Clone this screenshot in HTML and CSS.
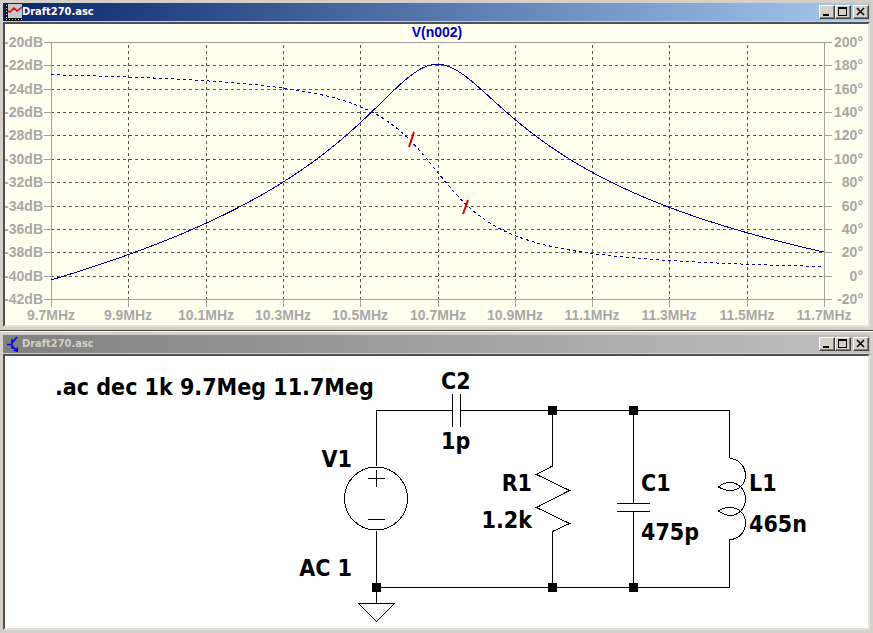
FILE: index.html
```html
<!DOCTYPE html>
<html lang="en">
<head>
    <meta charset="UTF-8">
    <meta name="viewport" content="width=device-width, initial-scale=1.0">
    <title>Draft270.asc</title>
    <link rel="stylesheet" href="styles.css">
</head>
<body>
    <section class="window">
        <header class="titlebar active">
            <svg class="icon" width="17" height="17" viewBox="0 0 17 17">
                <rect width="17" height="17" fill="#111"/>
                <rect x="3" y="0" width="14" height="14" fill="#c8c8c8"/>
                <path d="M1.5 1V16M1 15.5H17" stroke="#ddd" stroke-dasharray="1 2" shape-rendering="crispEdges"/>
                <path d="M3 7L5 8L9 4L12 7L17 3" fill="none" stroke="#e00000" stroke-width="1.5"/>
            </svg>
            <h1 class="caption">Draft270.asc</h1>
            <div class="controls">
                <button class="control" aria-label="Minimize"><svg width="12" height="10"><path d="M2 8H8" stroke="#000" stroke-width="2"/></svg></button>
                <button class="control" aria-label="Maximize"><svg width="12" height="10"><path d="M1.5 1V8.5H9.5V1" fill="none" stroke="#000"/><path d="M1 1H10" stroke="#000" stroke-width="2"/></svg></button>
                <button class="control close" aria-label="Close"><svg class="cross" width="12" height="10"><path d="M2 1L9 8M9 1L2 8" stroke="#000" stroke-width="1.5"/></svg></button>
            </div>
        </header>
        <div class="view plot-view">
            <svg class="plot" viewBox="5 24 863 301">
                <path class="grid" d="M51 65.5H824M51 89.5H824M51 112.5H824M51 135.5H824M51 159.5H824M51 182.5H824M51 206.5H824M51 229.5H824M51 252.5H824M51 276.5H824"/>
                <path class="grid" d="M128.5 45V299M206.5 45V299M283.5 45V299M360.5 45V299M438.5 45V299M515.5 45V299M592.5 45V299M669.5 45V299M747.5 45V299"/>
                <path class="axis" d="M44 42.5H832M44 299.5H832M51.5 42V307M824.5 42V307"/>
                <path class="axis" d="M44 65.5H51M44 89.5H51M44 112.5H51M44 135.5H51M44 159.5H51M44 182.5H51M44 206.5H51M44 229.5H51M44 252.5H51M44 276.5H51"/>
                <path class="axis" d="M824 65.5H832M824 89.5H832M824 112.5H832M824 135.5H832M824 159.5H832M824 182.5H832M824 206.5H832M824 229.5H832M824 252.5H832M824 276.5H832"/>
                <path class="axis" d="M128.5 299V307M206.5 299V307M283.5 299V307M360.5 299V307M438.5 299V307M515.5 299V307M592.5 299V307M669.5 299V307M747.5 299V307"/>
                <path class="trace" id="magnitude"/>
                <path class="trace phase" id="phase"/>
                <path class="mark" d="M414 132L409 147M468 200L463 214"/>
                <text class="trace-name" x="437" y="37">V(n002)</text>
                <g class="labels end">
                    <text x="43" y="47">-20dB</text>
                    <text x="43" y="70">-22dB</text>
                    <text x="43" y="94">-24dB</text>
                    <text x="43" y="117">-26dB</text>
                    <text x="43" y="140">-28dB</text>
                    <text x="43" y="164">-30dB</text>
                    <text x="43" y="187">-32dB</text>
                    <text x="43" y="211">-34dB</text>
                    <text x="43" y="234">-36dB</text>
                    <text x="43" y="257">-38dB</text>
                    <text x="43" y="281">-40dB</text>
                    <text x="43" y="304">-42dB</text>
                </g>
                <g class="labels end">
                    <text x="863" y="47">200°</text>
                    <text x="863" y="70">180°</text>
                    <text x="863" y="94">160°</text>
                    <text x="863" y="117">140°</text>
                    <text x="863" y="140">120°</text>
                    <text x="863" y="164">100°</text>
                    <text x="863" y="187">80°</text>
                    <text x="863" y="211">60°</text>
                    <text x="863" y="234">40°</text>
                    <text x="863" y="257">20°</text>
                    <text x="863" y="281">0°</text>
                    <text x="863" y="304">-20°</text>
                </g>
                <g class="labels middle">
                    <text x="51" y="320">9.7MHz</text>
                    <text x="128" y="320">9.9MHz</text>
                    <text x="206" y="320">10.1MHz</text>
                    <text x="283" y="320">10.3MHz</text>
                    <text x="360" y="320">10.5MHz</text>
                    <text x="438" y="320">10.7MHz</text>
                    <text x="515" y="320">10.9MHz</text>
                    <text x="592" y="320">11.1MHz</text>
                    <text x="669" y="320">11.3MHz</text>
                    <text x="747" y="320">11.5MHz</text>
                    <text x="824" y="320">11.7MHz</text>
                </g>
            </svg>
        </div>
    </section>

    <section class="window">
        <header class="titlebar">
            <svg class="icon" width="17" height="17" viewBox="0 0 17 17">
                <path d="M2 8.5H6M7 3V13M7 7L12 1M7 10L12 15" fill="none" stroke="#0000e0" stroke-width="1.5"/>
                <path d="M13 16V11L8 15Z" fill="#0000e0"/>
            </svg>
            <h1 class="caption">Draft270.asc</h1>
            <div class="controls">
                <button class="control" aria-label="Minimize"><svg width="12" height="10"><path d="M2 8H8" stroke="#000" stroke-width="2"/></svg></button>
                <button class="control" aria-label="Maximize"><svg width="12" height="10"><path d="M1.5 1V8.5H9.5V1" fill="none" stroke="#000"/><path d="M1 1H10" stroke="#000" stroke-width="2"/></svg></button>
                <button class="control close" aria-label="Close"><svg class="cross" width="12" height="10"><path d="M2 1L9 8M9 1L2 8" stroke="#000" stroke-width="1.5"/></svg></button>
            </div>
        </header>
        <div class="view">
            <svg class="schematic" viewBox="5 356 863 272">
                <!-- wires -->
                <path class="wire" d="M376.5 466V410.5H452M461 410.5H729.5V458M376.5 531V603M376 587.5H729.5V539M633.5 410V503M633.5 512V587"/>
                <!-- C2, C1 -->
                <path class="wire" d="M452.5 394V427M460.5 394V427M617 503.5H650M617 511.5H650"/>
                <!-- V1 -->
                <circle class="wire" cx="376" cy="498.5" r="31.5"/>
                <path class="wire" d="M368 478.5H385M376.5 470V487M368 519.5H385"/>
                <!-- R1 -->
                <path class="wire" d="M552.5 410V466L536.5 474.5L569.5 490.5L536.5 507.5L569.5 523.5L552.5 531.5V587"/>
                <!-- L1 -->
                <path class="wire" d="M729.5 458.5C739 458.5 745.5 467 745.5 475.5C745.5 484 739 490.5 730 490.5C725 490.5 722 489 718.5 487C722 484 725 482.5 730 482.5C739 482.5 745.5 490 745.5 499C745.5 508 739 515.5 730 515.5C725 515.5 722 513 718.5 511C722 508 725 507.5 730 507.5C739 507.5 745.5 514 745.5 523C745.5 532 739 539.5 729.5 539.5"/>
                <!-- ground -->
                <path class="wire" d="M358.5 603.5H394.5L376.5 621.5Z"/>
                <path d="M548 406h9v9h-9zM629 406h9v9h-9zM372 583h9v9h-9zM548 583h9v9h-9zM629 583h9v9h-9z"/>
                <g class="parts">
                    <text x="55" y="395">.ac dec 1k 9.7Meg 11.7Meg</text>
                    <text x="441" y="389">C2</text>
                    <text x="441" y="449">1p</text>
                    <text x="641" y="491">C1</text>
                    <text x="641" y="540">475p</text>
                    <text x="749" y="491">L1</text>
                    <text x="749" y="532">465n</text>
                </g>
                <g class="parts end">
                    <text x="352" y="467">V1</text>
                    <text x="352" y="576">AC 1</text>
                    <text x="532" y="491">R1</text>
                    <text x="532" y="528">1.2k</text>
                </g>
            </svg>
        </div>
    </section>

    <script>
        // V1 drives the R1 / C1 / L1 tank through C2
        const R = 1200, C1 = 475e-12, C2 = 1e-12, L = 465e-9;
        let magnitude = "";
        let phase = "";

        for (let x = 51; x <= 824; x++) {
            const f = 9.7e6 + (x - 51) / 773 * 2e6;
            const w = 2 * Math.PI * f;
            const g = 1 / R;
            const b = w * (C1 + C2) - 1 / (w * L);
            const dB = 20 * Math.log10(w * C2 / Math.hypot(g, b));
            const deg = 90 - Math.atan2(b, g) * 180 / Math.PI;
            const cmd = x === 51 ? "M" : "L";
            magnitude += cmd + x + " " + (42.5 + (-20 - dB) / 22 * 257).toFixed(2);
            phase += cmd + x + " " + (42.5 + (200 - deg) / 220 * 257).toFixed(2);
        }

        document.getElementById("magnitude").setAttribute("d", magnitude);
        document.getElementById("phase").setAttribute("d", phase);
    </script>
</body>
</html>
```
FILE: styles.css
```css
body {
    margin: 0;
    background-color: #d4d0c8;
    font-family: "DejaVu Sans Condensed", "DejaVu Sans", sans-serif;
}
.window {
    padding: 3px;
    border-bottom: 1px solid #404040;
}
.window + .window {
    border-top: 1px solid #fff;
    border-bottom: none;
}
.titlebar {
    display: flex;
    align-items: center;
    height: 18px;
    margin-bottom: 1px;
    padding: 0 1px 0 2px;
    background: linear-gradient(to right, #808080, #c0c0c0);
    color: #d4d0c8;
}
.titlebar.active {
    background: linear-gradient(to right, #0a246a, #a6caf0);
    color: #fff;
}
.icon { flex: none; }
.caption {
    flex: 1;
    margin: 0;
    font-size: 11px;
    font-weight: bold;
    line-height: 18px;
}
.controls { display: flex; }
.control {
    width: 16px;
    height: 14px;
    padding: 0;
    border: 1px solid;
    border-color: #fff #404040 #404040 #fff;
    background-color: #d4d0c8;
    box-shadow: inset -1px -1px #808080;
}
.control svg {
    display: block;
    margin: 1px;
    shape-rendering: crispEdges;
}
.control .cross { shape-rendering: auto; }
.close { margin-left: 2px; }
.view {
    border: 2px solid;
    border-color: #505050 #e4e2dc #e4e2dc #505050;
    background-color: #fff;
}
.plot-view { background-color: #fffff0; }
.plot, .schematic {
    display: block;
    width: 100%;
}
.grid {
    fill: none;
    stroke: #55554c;
    stroke-dasharray: 3 3;
    shape-rendering: crispEdges;
}
.axis {
    fill: none;
    stroke: #a0a09c;
    shape-rendering: crispEdges;
}
.trace {
    fill: none;
    stroke: #0000b4;
    shape-rendering: crispEdges;
}
.phase { stroke-dasharray: 3 3; }
.mark {
    stroke: #e00000;
    stroke-width: 2;
}
.labels, .trace-name {
    font-family: "Liberation Sans", sans-serif;
    font-size: 14px;
    font-weight: bold;
}
.labels { fill: #a8a8a4; }
.trace-name {
    fill: #0000c8;
    text-anchor: middle;
}
.end { text-anchor: end; }
.middle { text-anchor: middle; }
.wire {
    fill: none;
    stroke: #000;
    shape-rendering: crispEdges;
}
.parts {
    font-size: 23px;
    font-weight: bold;
}
```
